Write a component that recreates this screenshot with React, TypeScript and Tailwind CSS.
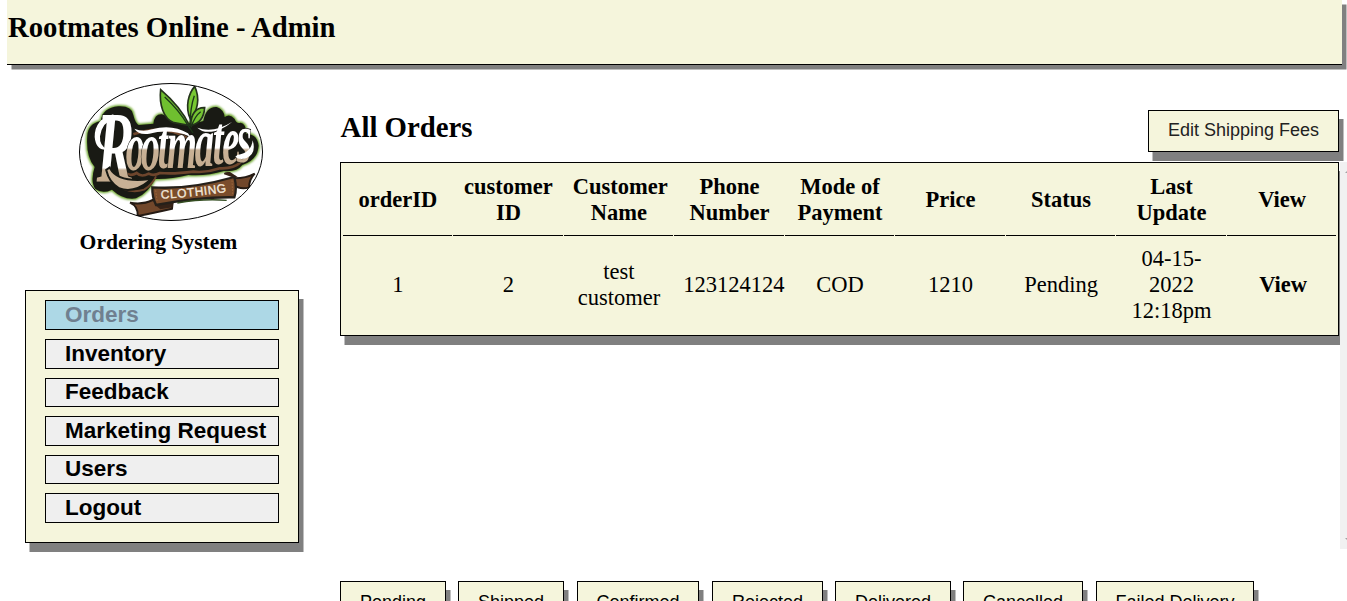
import React from "react";

const menu = ["Orders", "Inventory", "Feedback", "Marketing Request", "Users", "Logout"];

const columns = [
  "orderID",
  "customer ID",
  "Customer Name",
  "Phone Number",
  "Mode of Payment",
  "Price",
  "Status",
  "Last Update",
  "View",
];

const orders = [["1", "2", "test customer", "123124124", "COD", "1210", "Pending", "04-15-2022 12:18pm"]];

const filters = [
  { label: "Pending", width: "w-[106px]", gap: "" },
  { label: "Shipped", width: "w-[106px]", gap: "ml-[12px]" },
  { label: "Confirmed", width: "w-[122px]", gap: "ml-[13px]" },
  { label: "Rejected", width: "w-[111px]", gap: "ml-[13px]" },
  { label: "Delivered", width: "w-[116px]", gap: "ml-[12px]" },
  { label: "Cancelled", width: "w-[120px]", gap: "ml-[12px]" },
  { label: "Failed Delivery", width: "w-[158px]", gap: "ml-[13px]" },
];

const silhouette =
  "M52 182Q54 146 92 138Q98 98 145 94Q186 92 190 120Q196 144 206 150L250 146Q254 116 276 118Q296 124 304 136Q360 152 400 138Q408 94 440 96Q462 104 464 126Q480 114 494 132Q500 148 512 143Q530 147 528 176Q561 176 566 212Q563 256 517 270Q500 292 462 288Q410 304 355 300Q300 314 254 312Q238 352 198 370Q160 376 126 344Q98 358 76 342Q60 320 74 276Q47 244 52 182Z";

function Logo() {
  return (
    <svg className="block h-[138px] w-[184px]" viewBox="27 24 552 414">
      <defs>
        <linearGradient id="ink" gradientUnits="userSpaceOnUse" x1="300" y1="120" x2="300" y2="330">
          <stop offset="0" stopColor="#fff" />
          <stop offset="0.47" stopColor="#fff" />
          <stop offset="0.5" stopColor="#c8b196" />
          <stop offset="1" stopColor="#c0a688" />
        </linearGradient>
        <linearGradient id="inkTall" gradientUnits="userSpaceOnUse" x1="300" y1="120" x2="300" y2="340">
          <stop offset="0" stopColor="#fff" />
          <stop offset="0.72" stopColor="#fff" />
          <stop offset="0.75" stopColor="#c8b196" />
          <stop offset="1" stopColor="#c0a688" />
        </linearGradient>
        <clipPath id="oval">
          <ellipse cx="303" cy="231" rx="275" ry="206" />
        </clipPath>
        <filter id="glow" x="-10%" y="-10%" width="120%" height="120%">
          <feGaussianBlur stdDeviation="3" />
        </filter>
      </defs>
      <g clipPath="url(#oval)">
        <rect x="27" y="24" width="552" height="414" fill="#fff" />
        <path d={silhouette} fill="#6aa52c" stroke="#6aa52c" strokeWidth="8" filter="url(#glow)" />
        <path d={silhouette} fill="#191a14" />
        <path d="M128 318Q170 360 222 344Q246 330 258 304" fill="none" stroke="#6d452c" strokeWidth="6" />
        <path
          d="M166 292Q180 306 200 294Q214 308 236 296Q250 304 270 294Q310 298 370 290Q410 294 450 280Q490 282 512 262"
          fill="none"
          stroke="#6d452c"
          strokeWidth="8"
        />
        <path d="M190 178Q280 146 355 190" fill="none" stroke="#6d452c" strokeWidth="8" />
        <g transform="scale(.55 1)">
          <text
            className="font-['Liberation_Serif'] font-bold italic"
            stroke="#191a14"
            strokeWidth="5"
            paintOrder="stroke"
          >
            <tspan x="146" y="322" fontSize="306" fill="url(#inkTall)">
              R
            </tspan>
            <tspan x="304 386 478 529 680 778 830 910" y="284 286 280 278 274 268 266 262" fontSize="210" fill="url(#ink)">
              ootmates
            </tspan>
          </text>
        </g>
        <path d="M130 118Q74 132 74 186Q78 228 112 224Q88 212 90 184Q96 142 130 132Z" fill="#fff" />
        <path d="M193 161Q218 172 246 163Q306 146 354 175L361 185Q300 160 238 176Q206 181 193 161Z" fill="#fff" />
        <path d="M382 158Q430 176 487 140Q456 166 424 170Q397 173 382 158Z" fill="#fff" />
        <path
          d="M118 282Q142 326 235 316Q190 353 148 337Q120 320 112 286Z"
          fill="#c8b196"
          stroke="#191a14"
          strokeWidth="12"
          paintOrder="stroke"
        />
        <path d="M502 240Q544 234 548 196Q560 235 530 249Q507 256 496 245Z" fill="#fff" />
        <path d="M358 151C340 112 309 76 272 44C267 87 280 132 312 143Q336 148 358 151Z" fill="#6fbf2f" stroke="#25331c" strokeWidth="5" />
        <path d="M361 132C344 95 356 55 374 34C391 70 383 108 361 132Z" fill="#78c832" stroke="#25331c" strokeWidth="5" />
        <path d="M363 151C361 117 379 97 404 98C402 126 389 146 363 151Z" fill="#74c332" stroke="#25331c" strokeWidth="5" />
        <path d="M284 66Q326 104 354 151L369 174M373 62Q361 96 360 150M392 110Q374 123 363 157" fill="none" stroke="#1c3719" strokeWidth="4" />
        <path
          d="M494 310Q528 310 554 296Q536 315 538 337Q510 346 489 328ZM248 375Q218 390 180 383Q205 394 203 423Q249 414 306 401L308 381Z"
          fill="#71472b"
          stroke="#251b14"
          strokeWidth="6"
        />
        <path d="M310 382L255 390L271 403L308 397ZM494 309L462 298Q460 289 480 291L503 306Z" fill="#352217" />
        <path d="M247 337Q354 345 493 306Q502 342 493 367Q389 365 258 390Q246 367 247 337Z" fill="#7b4d2c" stroke="#25201a" strokeWidth="7" />
        <path d="M257 346L262 382M486 316L488 358" fill="none" stroke="#a87143" strokeWidth="2" strokeDasharray="5 4" />
        <path id="ribbon" d="M273 371Q372 366 474 350" fill="none" />
        <text className="font-['Liberation_Sans_Narrow','Liberation_Sans']" fontSize="36" fill="#f3e9dc" stroke="#f3e9dc" strokeWidth="1">
          <textPath href="#ribbon" textLength="198" lengthAdjust="spacing">
            CLOTHING
          </textPath>
        </text>
        <path d="M322 384Q400 370 470 376" fill="none" stroke="#344d21" strokeWidth="4" />
      </g>
      <ellipse cx="303" cy="231" rx="274.5" ry="205.5" fill="none" stroke="#000" strokeWidth="3" />
    </svg>
  );
}

export default function App() {
  return (
    <div className="h-[601px] w-[1347px] overflow-hidden bg-white font-['Liberation_Serif',serif] text-black">
      <header className="ml-[7px] h-[65px] w-[1335px] border-b border-black bg-[#f5f5dc] pt-[11px] pl-px shadow-[4.5px_4.5px_0_#808080]">
        <h1 className="text-[28.7px] leading-[33px] font-bold">Rootmates Online - Admin</h1>
      </header>

      <div className="flex">
        <aside className="ml-[25px] w-[274px] shrink-0 pt-[18px]">
          <div className="ml-[54px]">
            <Logo />
            <p className="mt-[8px] pl-[0.6px] text-[21.6px] leading-[26px] font-bold">Ordering System</p>
          </div>
          <nav className="mt-[35px] flex h-[253px] flex-col gap-[8.9px] border border-black bg-[#f5f5dc] px-[19px] pt-[9.4px] shadow-[4.5px_9px_0_#808080]">
            {menu.map((item) => (
              <button
                key={item}
                className={
                  "flex h-[29.7px] shrink-0 items-center border border-black pb-[0.6px] pl-[19px] text-left font-['Liberation_Sans',sans-serif] text-[22.5px] leading-[26px] font-bold whitespace-nowrap " +
                  (item === "Orders" ? "bg-[#add8e6] text-[#708090]" : "bg-[#efefef]")
                }
              >
                {item}
              </button>
            ))}
          </nav>
        </aside>

        <main className="ml-[41px] w-[1007px] shrink-0 pt-[45px]">
          <div className="flex h-[52px] w-[999px] items-start justify-between">
            <h2 className="pt-px pl-[0.6px] text-[28.8px] leading-[33px] font-bold">All Orders</h2>
            <button className="h-[42px] w-[191px] border border-black bg-[#f5f5dc] pb-[2px] font-['Liberation_Sans',sans-serif] text-[18px] leading-[21px] text-[#222] shadow-[4.5px_9px_0_#808080]">
              Edit Shipping Fees
            </button>
          </div>

          <div className="flex h-[387px]">
            <div className="w-[1000px] shrink-0 overflow-hidden">
              <table className="w-[999px] table-fixed border-separate border-spacing-[1.8px] border border-black bg-[#f5f5dc] px-[0.6px] text-center text-[22.5px] leading-[26px] shadow-[4.5px_9px_0_#808080]">
                <thead>
                  <tr className="h-[72px]">
                    {columns.map((name) => (
                      <th key={name} className="border-b border-black pt-px pr-[8px] pl-[9px] align-middle font-bold">
                        {name}
                      </th>
                    ))}
                  </tr>
                </thead>
                <tbody>
                  {orders.map((row) => (
                    <tr key={row[0]} className="h-[97px]">
                      {row.map((cell, i) => (
                        <td key={i} className="pr-[8px] pb-px pl-[9px] align-middle">
                          {i === 7 ? <div className="px-[5px]">{cell}</div> : cell}
                        </td>
                      ))}
                      <td className="pb-px pl-[3px] align-middle font-bold">View</td>
                    </tr>
                  ))}
                </tbody>
              </table>
            </div>
            <div className="flex w-[7px] flex-col items-end justify-between bg-[#f1f1f1] py-[9px]">
              <svg className="h-[2px] w-[2px]" viewBox="0 0 2 2">
                <path d="M0 2L2 0V2Z" fill="#a3a3a3" />
              </svg>
              <svg className="h-[2px] w-[2px]" viewBox="0 0 2 2">
                <path d="M0 0H2V2Z" fill="#a3a3a3" />
              </svg>
            </div>
          </div>

          <div className="mt-[32px] flex">
            {filters.map((f) => (
              <button
                key={f.label}
                className={
                  "h-[42px] shrink-0 border border-black bg-[#f5f5dc] font-['Liberation_Sans',sans-serif] text-[18px] leading-[21px] shadow-[4.5px_9px_0_#808080] " +
                  f.width +
                  " " +
                  f.gap
                }
              >
                {f.label}
              </button>
            ))}
          </div>
        </main>
      </div>
    </div>
  );
}
